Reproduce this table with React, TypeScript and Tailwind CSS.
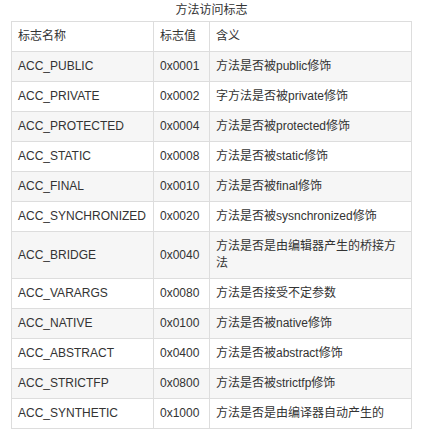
import React from "react";

const rows: [string, string, string][] = [
  ["ACC_PUBLIC", "0x0001", "方法是否被public修饰"],
  ["ACC_PRIVATE", "0x0002", "字方法是否被private修饰"],
  ["ACC_PROTECTED", "0x0004", "方法是否被protected修饰"],
  ["ACC_STATIC", "0x0008", "方法是否被static修饰"],
  ["ACC_FINAL", "0x0010", "方法是否被final修饰"],
  ["ACC_SYNCHRONIZED", "0x0020", "方法是否被sysnchronized修饰"],
  ["ACC_BRIDGE", "0x0040", "方法是否是由编辑器产生的桥接方法"],
  ["ACC_VARARGS", "0x0080", "方法是否接受不定参数"],
  ["ACC_NATIVE", "0x0100", "方法是否被native修饰"],
  ["ACC_ABSTRACT", "0x0400", "方法是否被abstract修饰"],
  ["ACC_STRICTFP", "0x0800", "方法是否被strictfp修饰"],
  ["ACC_SYNTHETIC", "0x1000", "方法是否是由编译器自动产生的"],
];

export default function App() {
  return (
    <div
      className="bg-white text-[12px] text-[#333] pl-[11px]"
      style={{ fontFamily: '"Liberation Sans", Arial, "Noto Sans CJK SC", sans-serif' }}
    >
      <table className="border-collapse table-fixed w-[400px]">
        <caption className="h-[21px] leading-[21px] text-center text-[#333]">方法访问标志</caption>
        <colgroup>
          <col className="w-[142px]" />
          <col className="w-[56px]" />
          <col className="w-[202px]" />
        </colgroup>
        <thead>
          <tr className="bg-white">
            <th className="border border-[#ddd] px-[6px] py-[6px] leading-[17px] font-normal text-left">标志名称</th>
            <th className="border border-[#ddd] px-[6px] py-[6px] leading-[17px] font-normal text-left">标志值</th>
            <th className="border border-[#ddd] px-[6px] py-[6px] leading-[17px] font-normal text-left">含义</th>
          </tr>
        </thead>
        <tbody>
          {rows.map((r, i) => (
            <tr key={r[0]} className={i % 2 === 0 ? "bg-[#f6f6f6]" : "bg-white"}>
              <td className="border border-[#ddd] px-[6px] py-[6px] leading-[17px] whitespace-nowrap">{r[0]}</td>
              <td className="border border-[#ddd] px-[6px] py-[6px] leading-[17px]">{r[1]}</td>
              <td className="border border-[#ddd] px-[6px] py-[6px] leading-[17px]">{r[2]}</td>
            </tr>
          ))}
        </tbody>
      </table>
    </div>
  );
}
